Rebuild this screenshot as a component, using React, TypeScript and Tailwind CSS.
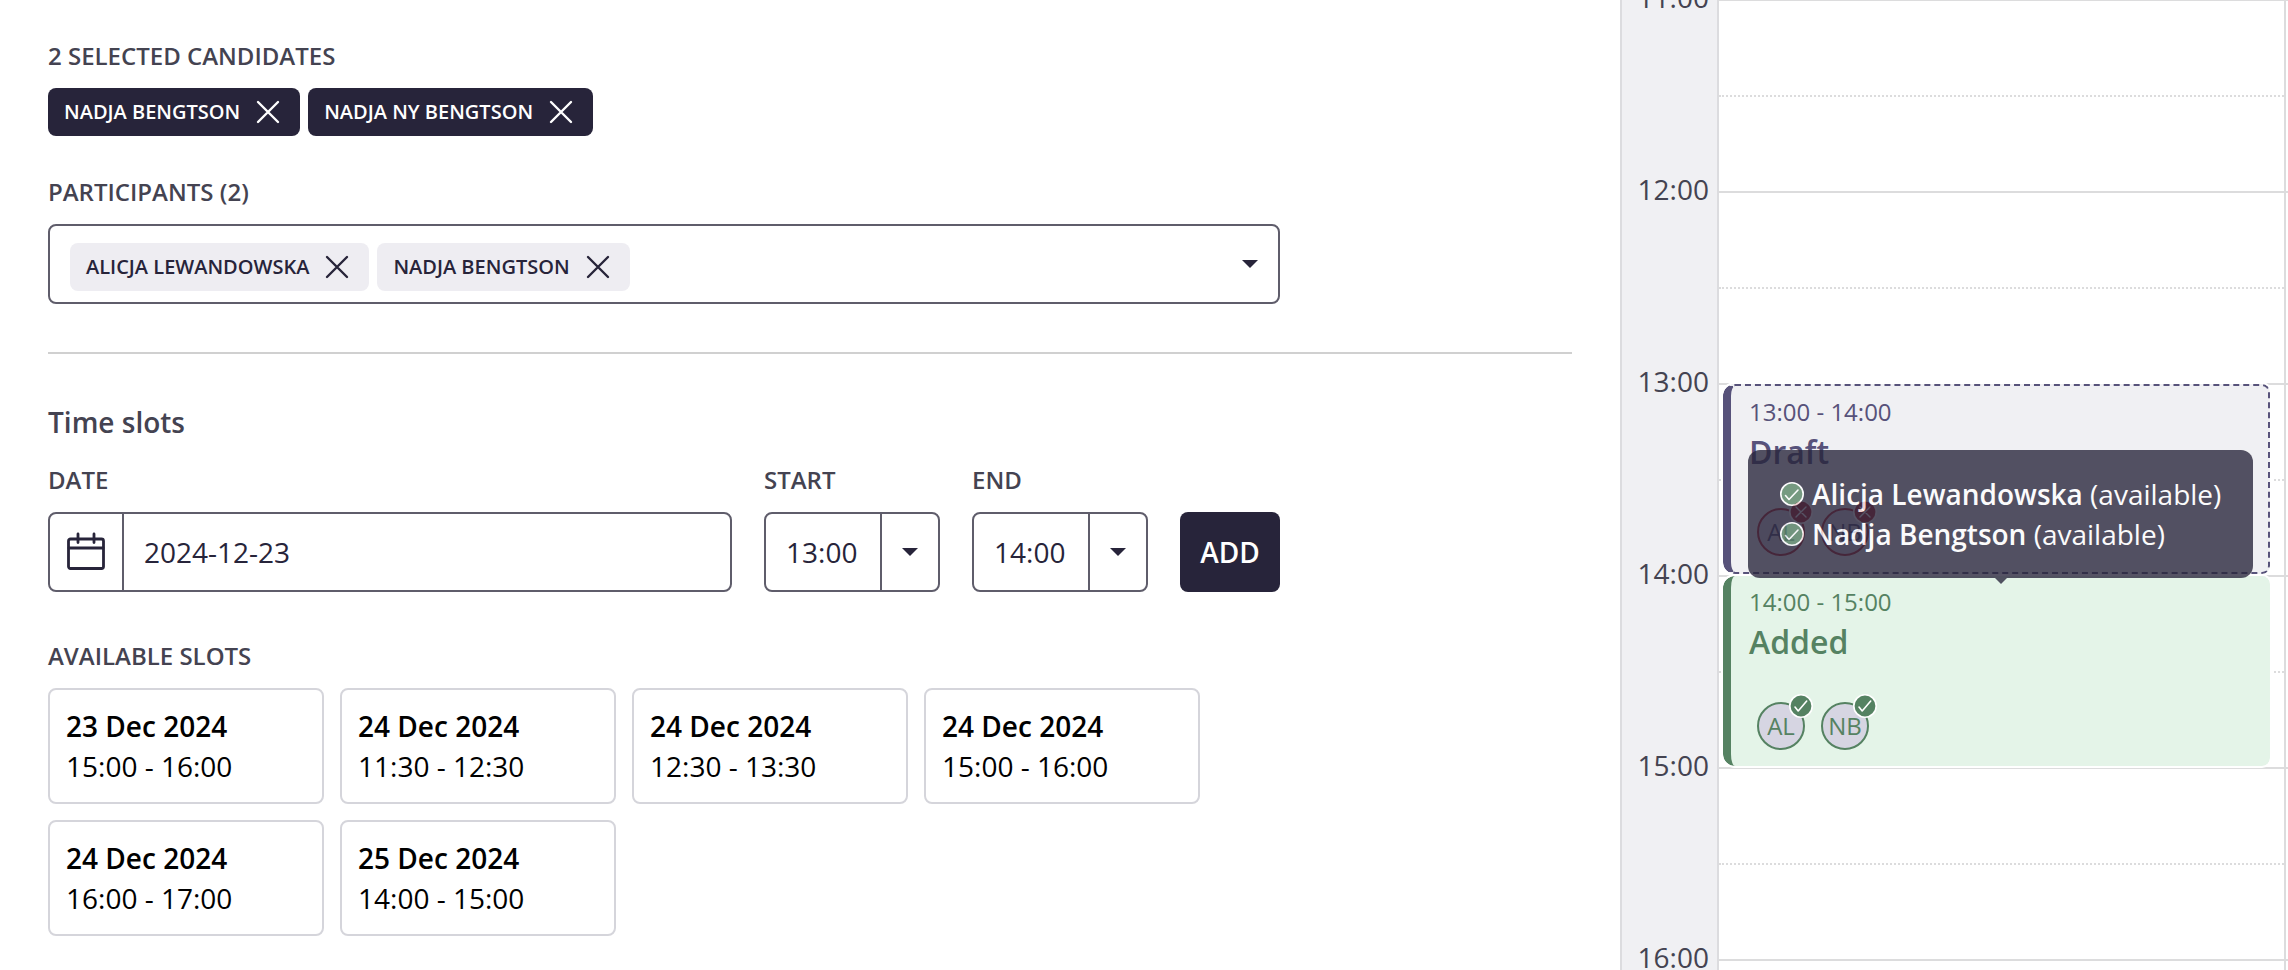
import { useState } from "react"

const label = "text-2xl leading-8 font-semibold uppercase text-[#444351]"

const available = [
  { date: "23 Dec 2024", time: "15:00 - 16:00" },
  { date: "24 Dec 2024", time: "11:30 - 12:30" },
  { date: "24 Dec 2024", time: "12:30 - 13:30" },
  { date: "24 Dec 2024", time: "15:00 - 16:00" },
  { date: "24 Dec 2024", time: "16:00 - 17:00" },
  { date: "25 Dec 2024", time: "14:00 - 15:00" },
]

const hours = ["11:00", "12:00", "13:00", "14:00", "15:00", "16:00"]

const times = ["12:00", "13:00", "14:00", "15:00", "16:00"]

const Cross = () => (
  <svg viewBox="0 0 24 24" className="w-6 h-6" fill="none" stroke="currentColor" strokeWidth="2.4" strokeLinecap="round">
    <path d="M2 2l20 20M22 2L2 22" />
  </svg>
)

const Caret = () => (
  <svg viewBox="0 0 16 8" className="w-4 h-2 shrink-0 pointer-events-none" fill="#27243a">
    <path d="M0 0h16L8 8z" />
  </svg>
)

const Chip = ({ name, dark, onRemove }: { name: string; dark?: boolean; onRemove: () => void }) => (
  <span className={`h-12 pl-4 pr-5 rounded-lg flex items-center gap-4 text-xl font-semibold uppercase ${dark ? "bg-[#27243a] text-white" : "bg-[#eeedf2] text-[#27243a]"}`}>
    {name}
    <button type="button" aria-label={`Remove ${name}`} onClick={onRemove}>
      <Cross />
    </button>
  </span>
)

const TimeSelect = ({ id, text, initial }: { id: string; text: string; initial: string }) => (
  <div className="flex flex-col gap-4">
    <label htmlFor={id} className={label}>{text}</label>
    <div className="relative flex items-center w-44 h-20 border-2 border-[#5f5d6b] rounded-lg">
      <select id={id} defaultValue={initial} className="appearance-none w-full h-full pl-5 text-[28px] bg-transparent outline-none">
        {times.map((t) => (
          <option key={t}>{t}</option>
        ))}
      </select>
      <span className="absolute right-0 inset-y-0 w-[58px] border-l-2 border-[#5f5d6b] flex items-center justify-center pointer-events-none">
        <Caret />
      </span>
    </div>
  </div>
)

const Badge = ({ ok }: { ok: boolean }) => (
  <svg viewBox="0 0 24 24" className="absolute -top-2.5 -right-2.5 w-6 h-6" fill="none" stroke="#fff" strokeLinecap="round" strokeLinejoin="round">
    <circle cx="12" cy="12" r="11.2" fill={ok ? "#558262" : "#b3303a"} strokeWidth="1.600" />
    {ok ? <path d="M6 13l3.200 4L17.700 7" strokeWidth="1.600" /> : <path d="M7 7l10 10M17 7L7 17" strokeWidth="1.400" />}
  </svg>
)

const Avatars = ({ ok }: { ok: boolean }) => (
  <div className="flex gap-4 pl-2">
    {["AL", "NB"].map((n) => (
      <span
        key={n}
        className={`relative size-12 rounded-full border-2 flex items-center justify-center text-2xl bg-[#d6d5e2] ${ok ? "border-[#558262]" : "border-[#b3303a]"}`}
      >
        {n}
        <Badge ok={ok} />
      </span>
    ))}
  </div>
)

const TooltipRow = ({ name }: { name: string }) => (
  <li className="flex items-center gap-2 whitespace-nowrap">
    <svg viewBox="0 0 24 24" className="w-6 h-6 shrink-0" fill="none" stroke="#fff" strokeLinecap="round" strokeLinejoin="round">
      <circle cx="12" cy="12" r="11.2" fill="#558262" strokeWidth="1.600" />
      <path d="M5.500 13.500l3.500 4L18 8" strokeWidth="1.600" />
    </svg>
    <span><b className="font-semibold">{name}</b> (available)</span>
  </li>
)

const App = () => {
  const [candidates, setCandidates] = useState(["Nadja Bengtson", "Nadja NY Bengtson"])
  const [participants, setParticipants] = useState(["Alicja Lewandowska", "Nadja Bengtson"])

  return (
    <div className="flex h-screen overflow-hidden bg-white text-[#27243a] font-['Open_Sans','Noto_Sans',sans-serif]">
      <main className="flex-1 min-w-0 px-12 pt-10">
        <section>
          <h2 className={label}>{candidates.length} selected candidates</h2>
          <div className="flex gap-2 mt-4">
            {candidates.map((c) => (
              <Chip key={c} name={c} dark onRemove={() => setCandidates(candidates.filter((x) => x !== c))} />
            ))}
          </div>
        </section>

        <section className="mt-10 max-w-[1232px]">
          <h2 className={label}>Participants ({participants.length})</h2>
          <div className="mt-4 h-20 px-5 flex items-center border-2 border-[#5f5d6b] rounded-lg">
            <div className="flex gap-2 pt-1.5">
              {participants.map((p) => (
                <Chip key={p} name={p} onRemove={() => setParticipants(participants.filter((x) => x !== p))} />
              ))}
            </div>
            <button type="button" aria-label="Choose participants" className="ml-auto">
              <Caret />
            </button>
          </div>
        </section>

        <hr className="mt-12 border-t-2 border-[#d0d0d0]" />

        <section className="mt-12 max-w-[1232px]">
          <h1 className="text-[28px] leading-10 font-semibold text-[#444351]">Time slots</h1>
          <form className="mt-5.5 flex items-end gap-8" onSubmit={(e) => e.preventDefault()}>
            <div className="flex-1 flex flex-col gap-4">
              <label htmlFor="date" className={label}>Date</label>
              <div className="flex h-20 border-2 border-[#5f5d6b] rounded-lg">
                <span className="w-[74px] border-r-2 border-[#5f5d6b] flex items-center justify-center">
                  <svg viewBox="0 0 40 40" className="w-10 h-10" fill="none" stroke="currentColor" strokeWidth="2.800" strokeLinecap="round" strokeLinejoin="round">
                    <rect x="2.500" y="7" width="35" height="29.500" rx="2" />
                    <path d="M3 16h34M12 2v8.500M28 2v8.500" />
                  </svg>
                </span>
                <input id="date" defaultValue="2024-12-23" className="flex-1 min-w-0 px-5 text-[28px] bg-transparent outline-none" />
              </div>
            </div>
            <TimeSelect id="start" text="Start" initial="13:00" />
            <TimeSelect id="end" text="End" initial="14:00" />
            <button type="submit" className="w-[100px] h-20 rounded-lg bg-[#27243a] text-white text-[28px] font-semibold uppercase">Add</button>
          </form>
        </section>

        <section className="mt-12 max-w-[1232px]">
          <h2 className={label}>Available slots</h2>
          <div className="mt-4 flex flex-wrap gap-4">
            {available.map((s) => (
              <button key={s.date + s.time} type="button" className="w-[276px] p-4 border-2 border-[#d5d5db] rounded-lg text-left text-[28px] leading-10 text-black">
                <span className="block font-semibold">{s.date}</span>
                <span className="block">{s.time}</span>
              </button>
            ))}
          </div>
        </section>
      </main>

      <aside className="w-[668px] shrink-0 relative">
        {/* first hour line sits right on the top edge */}
        <div className="-mt-px">
          {hours.map((h) => (
            <div key={h} className="flex h-48">
              <div className="w-[99px] border-x-2 border-[#dcdcdf] bg-[#f0f0f3] pr-2 text-right text-[28px] text-[#444351]">
                <span className="block -mt-4.5 leading-8">{h}</span>
              </div>
              <div className="flex-1 border-t-2 border-r-2 border-[#dcdcdd]">
                <div className="h-[94px]" />
                <div className="border-t-2 border-dotted border-[#dcdcdd]" />
              </div>
              <div className="w-[2px] border-t-2 border-[#dcdcdd]" />
            </div>
          ))}
        </div>

        <article className="absolute left-[103px] right-[18px] top-[384px] h-[190px] rounded-l-xl rounded-r-lg bg-[#f0f0f3] border-2 border-l-8 border-dashed [border-left-style:solid] border-[#57527a] outline-2 outline-white text-[#57527a] pl-[18px]">
          <p className="pt-1.5 text-2xl leading-10">13:00 - 14:00</p>
          <h3 className="text-[32px] leading-10 font-semibold">Draft</h3>
          <div className="mt-9">
            <Avatars ok={false} />
          </div>
        </article>

        <article className="absolute left-[103px] right-[18px] top-[576px] h-[190px] rounded-l-xl rounded-r-lg bg-[#e4f4e8] border-l-8 border-[#558262] outline-2 outline-white text-[#558262] pl-[18px]">
          <p className="pt-1.5 text-2xl leading-10">14:00 - 15:00</p>
          <h3 className="text-[32px] leading-10 font-semibold">Added</h3>
          <div className="mt-10">
            <Avatars ok />
          </div>
        </article>

        <div role="tooltip" className="absolute left-[128px] right-[35px] top-[450px] px-8 py-6 rounded-xl bg-[#27243a] opacity-78 text-white text-[28px] leading-10">
          <ul>
            <TooltipRow name="Alicja Lewandowska" />
            <TooltipRow name="Nadja Bengtson" />
          </ul>
          <svg viewBox="0 0 12 6" className="absolute left-1/2 top-full -ml-1.5 w-3 h-1.5" fill="#27243a">
            <path d="M0 0h12L6 6z" />
          </svg>
        </div>
      </aside>
    </div>
  )
}

export default App
